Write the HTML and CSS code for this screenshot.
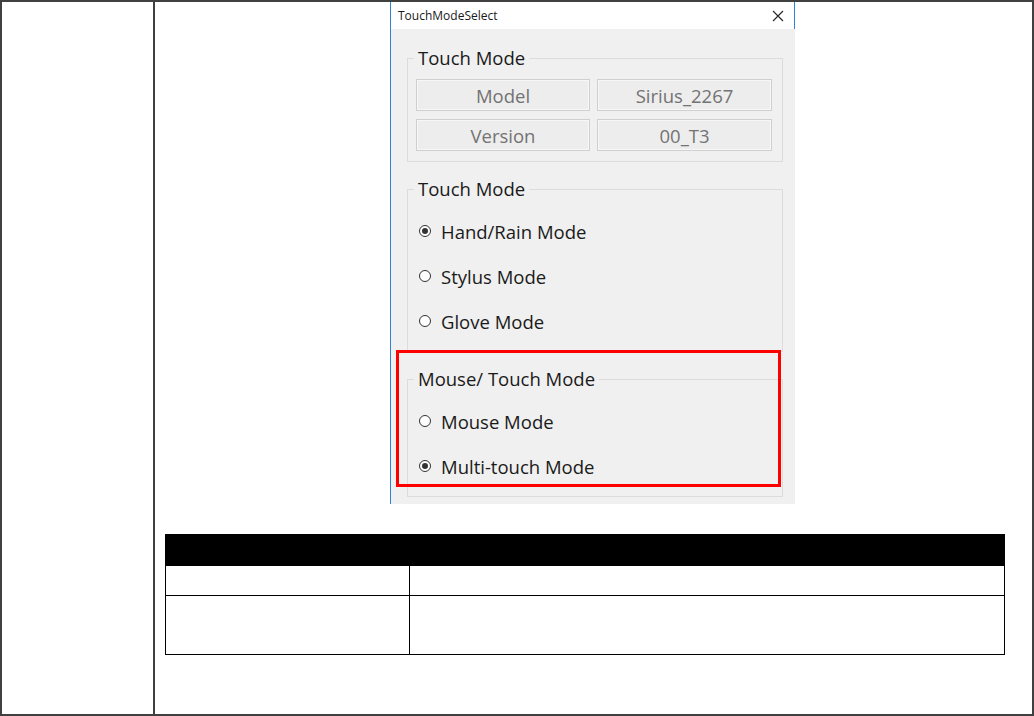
FILE: index.html
```html
<!DOCTYPE html>
<html>
<head>
  <title>Touch Mode Select</title>
  <meta http-equiv="Content-Type" content="text/html; charset=UTF-8">
  <link rel="stylesheet" href="styles.css">
</head>
<body>
  <div class="page">
    <div class="side-cell"></div>

    <div class="main-cell">
      <div class="dialog">
        <div class="titlebar">
          <span class="title">TouchModeSelect</span>
          <svg class="close" width="12" height="12" viewBox="0 0 12 12">
            <path d="M1 1 L11 11 M11 1 L1 11" stroke="#222" stroke-width="1.1" fill="none"/>
          </svg>
        </div>

        <div class="dialog-body">
          <fieldset class="group">
            <legend>Touch Mode</legend>
            <div class="info-grid">
              <div class="info-btn">Model</div>
              <div class="info-btn">Sirius_2267</div>
              <div class="info-btn">Version</div>
              <div class="info-btn">00_T3</div>
            </div>
          </fieldset>

          <fieldset class="group">
            <legend>Touch Mode</legend>
            <div class="radio-list">
              <div class="radio checked"><span class="dot"></span>Hand/Rain Mode</div>
              <div class="radio"><span class="dot"></span>Stylus Mode</div>
              <div class="radio"><span class="dot"></span>Glove Mode</div>
            </div>
          </fieldset>

          <fieldset class="group">
            <legend>Mouse/ Touch Mode</legend>
            <div class="radio-list">
              <div class="radio"><span class="dot"></span>Mouse Mode</div>
              <div class="radio checked"><span class="dot"></span>Multi-touch Mode</div>
            </div>
          </fieldset>
        </div>

        <!-- highlight drawn over the screenshot -->
        <div class="highlight"></div>
      </div>

      <table class="spec-table">
        <tr class="head-row"><th></th><th></th></tr>
        <tr class="row-short"><td></td><td></td></tr>
        <tr class="row-tall"><td></td><td></td></tr>
      </table>
    </div>
  </div>
</body>
</html>
```

FILE: styles.css
```css
body {
  margin: 0;
  padding: 0;
  font-family: "Open Sans", "Noto Sans", sans-serif;
  background: #ffffff;
}

.page {
  display: grid;
  grid-template-columns: 151px 1fr;
  width: 1034px;
  height: 716px;
  box-sizing: border-box;
  border: 2px solid #404040;
}

.main-cell {
  border-left: 2px solid #404040;
}

.dialog {
  position: relative;
  width: 405px;
  margin-left: 235px;
  background: #f0f0f0;
  border-left: 1px solid #2f83d6;
  box-sizing: border-box;
}

.titlebar {
  display: flex;
  align-items: center;
  justify-content: space-between;
  height: 27px;
  padding: 0 10px 0 7px;
  background: #ffffff;
  border-right: 1px solid #2f83d6;
}

.title {
  font-size: 12px;
  color: #1a1a1a;
}

.close {
  display: block;
}

.dialog-body {
  display: flex;
  flex-direction: column;
  gap: 15px;
  padding: 17px 12px 7px 16px;
}

.group {
  margin: 0;
  padding: 9px 9px 10px 8px;
  border: 1px solid #dcdcdc;
  min-width: 0;
}

.group legend {
  margin-left: -2px;
  padding: 0 4px;
  font-size: 18.5px;
  font-weight: 500;
  line-height: 24px;
  color: #1a1a1a;
}

.info-grid {
  display: grid;
  grid-template-columns: 174px 175px;
  gap: 8px 7px;
}

.info-btn {
  height: 32px;
  box-sizing: border-box;
  display: flex;
  align-items: center;
  justify-content: center;
  border: 1px solid #cfcfcf;
  box-shadow: inset 0 0 0 1px #f7f7f7;
  background: #ededed;
  color: #737373;
  font-size: 18.5px;
  font-weight: 500;
}

.radio-list {
  display: flex;
  flex-direction: column;
  gap: 21px;
  padding: 9px 0 8px 3px;
}

.radio {
  display: flex;
  align-items: center;
  height: 24px;
  font-size: 18.5px;
  font-weight: 500;
  color: #1a1a1a;
}

.radio .dot {
  width: 12px;
  height: 12px;
  box-sizing: border-box;
  border: 1px solid #333333;
  border-radius: 50%;
  background: #ffffff;
  margin-right: 10px;
  position: relative;
}

.radio.checked .dot::after {
  content: "";
  position: absolute;
  left: 2px;
  top: 2px;
  width: 6px;
  height: 6px;
  border-radius: 50%;
  background: #333333;
}

.highlight {
  position: absolute;
  left: 5px;
  top: 348px;
  width: 385px;
  height: 137px;
  box-sizing: border-box;
  border: 3px solid #ff0000;
}

.spec-table {
  width: 840px;
  margin: 30px 0 0 10px;
  border-collapse: collapse;
}

.spec-table th,
.spec-table td {
  border: 1px solid #000000;
  padding: 0;
}

.spec-table th:first-child,
.spec-table td:first-child {
  width: 243px;
}

.head-row th {
  height: 30px;
  background: #000000;
}

.row-short td {
  height: 29px;
}

.row-tall td {
  height: 58px;
}
```
